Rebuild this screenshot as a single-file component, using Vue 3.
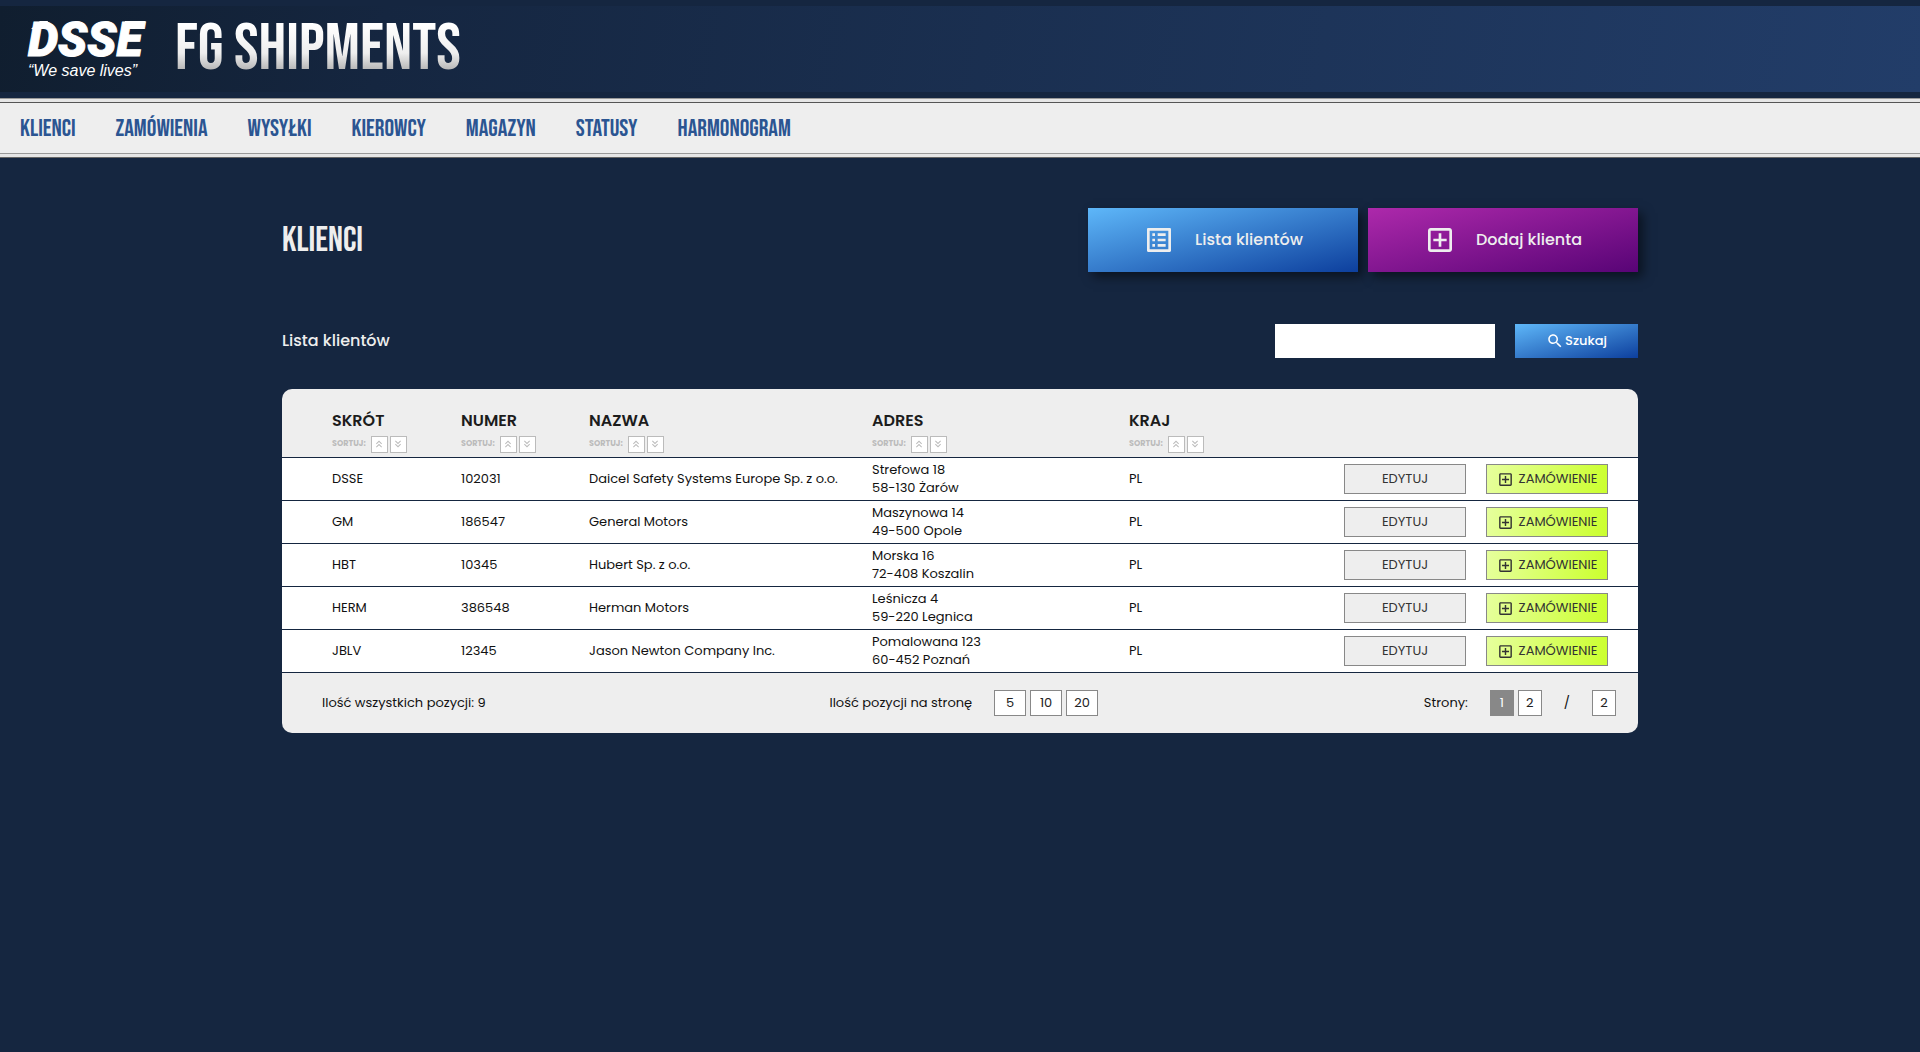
<script setup>
import { ref } from 'vue'

const links = ['Klienci', 'Zamówienia', 'Wysyłki', 'Kierowcy', 'Magazyn', 'Statusy', 'Harmonogram']
const columns = ['Skrót', 'Numer', 'Nazwa', 'Adres', 'Kraj']
const clients = [
  { short: 'DSSE', number: '102031', name: 'Daicel Safety Systems Europe Sp. z o.o.', street: 'Strefowa 18', city: '58-130 Żarów', country: 'PL' },
  { short: 'GM', number: '186547', name: 'General Motors', street: 'Maszynowa 14', city: '49-500 Opole', country: 'PL' },
  { short: 'HBT', number: '10345', name: 'Hubert Sp. z o.o.', street: 'Morska 16', city: '72-408 Koszalin', country: 'PL' },
  { short: 'HERM', number: '386548', name: 'Herman Motors', street: 'Leśnicza 4', city: '59-220 Legnica', country: 'PL' },
  { short: 'JBLV', number: '12345', name: 'Jason Newton Company Inc.', street: 'Pomalowana 123', city: '60-452 Poznań', country: 'PL' },
]
const pageSizes = [5, 10, 20]
const query = ref('')
const page = ref(1)

const addIcon = 'M19 3H5c-1.11 0-2 .9-2 2v14c0 1.1.89 2 2 2h14c1.1 0 2-.9 2-2V5c0-1.1-.9-2-2-2zm0 16H5V5h14v14zm-8-2h2v-4h4v-2h-4V7h-2v4H7v2h4z'
const listIcon = 'M19 5v14H5V5h14m1.1-2H3.9c-.5 0-.9.4-.9.9v16.2c0 .4.4.9.9.9h16.2c.4 0 .9-.5.9-.9V3.9c0-.5-.5-.9-.9-.9zM11 7h6v2h-6V7zm0 4h6v2h-6v-2zm0 4h6v2h-6zM7 7h2v2H7zm0 4h2v2H7zm0 4h2v2H7z'
const searchIcon = 'M15.5 14h-.79l-.28-.27C15.41 12.59 16 11.11 16 9.5 16 5.91 13.09 3 9.5 3S3 5.91 3 9.5 5.91 16 9.5 16c1.61 0 3.09-.59 4.23-1.57l.27.28v.79l5 4.99L20.49 19l-4.99-5zm-6 0C7.01 14 5 11.99 5 9.5S7.01 5 9.5 5 14 7.01 14 9.5 11.99 14 9.5 14z'
const upIcon = 'M6 17.59 7.41 19 12 14.42 16.59 19 18 17.59l-6-6zM6 11l1.41 1.41L12 7.83l4.59 4.58L18 11l-6-6z'
const downIcon = 'M18 6.41 16.59 5 12 9.58 7.41 5 6 6.41l6 6zM18 13l-1.41-1.41L12 16.17l-4.59-4.58L6 13l6 6z'
</script>

<template>
  <div class="app">
    <header class="banner">
      <svg class="logo" viewBox="0 0 120 60" role="img" aria-label="DSSE">
        <text class="logo-name" x="0" y="37">DSSE</text>
        <path d="M3 10 12 2h8l-3 8z M97 2h21l-9 8H95z" />
        <text class="logo-motto" x="0" y="57">“We save lives”</text>
      </svg>
      <h1 class="brand">FG Shipments</h1>
    </header>

    <nav class="menu">
      <ul class="menu-list">
        <li v-for="link in links" :key="link"><a class="menu-link" href="#">{{ link }}</a></li>
      </ul>
    </nav>

    <main class="content">
      <div class="title-row">
        <h2 class="title">Klienci</h2>
        <div class="actions">
          <button class="action blue" type="button">
            <svg class="icon-lg" viewBox="0 0 24 24" aria-hidden="true"><path :d="listIcon" /></svg>
            <span>Lista klientów</span>
          </button>
          <button class="action purple" type="button">
            <svg class="icon-lg" viewBox="0 0 24 24" aria-hidden="true"><path :d="addIcon" /></svg>
            <span>Dodaj klienta</span>
          </button>
        </div>
      </div>

      <div class="search-row">
        <h3 class="subtitle">Lista klientów</h3>
        <form class="search" @submit.prevent>
          <input v-model="query" class="search-input" type="text" aria-label="Szukaj klienta">
          <button class="search-button blue" type="submit">
            <svg class="icon-md" viewBox="0 0 24 24" aria-hidden="true"><path :d="searchIcon" /></svg>
            <span>Szukaj</span>
          </button>
        </form>
      </div>

      <section class="card">
        <table class="clients">
          <colgroup>
            <col class="col-short">
            <col class="col-number">
            <col class="col-name">
            <col class="col-address">
            <col>
            <col class="col-buttons">
          </colgroup>
          <thead>
            <tr>
              <th v-for="column in columns" :key="column" scope="col">
                <span class="column-name">{{ column }}</span>
                <span class="sort">
                  <span class="sort-label">Sortuj:</span>
                  <button class="sort-button" type="button" :aria-label="`${column} rosnąco`">
                    <svg class="icon-xs" viewBox="0 0 24 24" aria-hidden="true"><path :d="upIcon" /></svg>
                  </button>
                  <button class="sort-button" type="button" :aria-label="`${column} malejąco`">
                    <svg class="icon-xs" viewBox="0 0 24 24" aria-hidden="true"><path :d="downIcon" /></svg>
                  </button>
                </span>
              </th>
              <td></td>
            </tr>
          </thead>
          <tbody>
            <tr v-for="client in clients" :key="client.number">
              <td>{{ client.short }}</td>
              <td>{{ client.number }}</td>
              <td>{{ client.name }}</td>
              <td>{{ client.street }}<br>{{ client.city }}</td>
              <td>{{ client.country }}</td>
              <td>
                <div class="row-buttons">
                  <button class="row-button" type="button">Edytuj</button>
                  <button class="row-button green" type="button">
                    <svg class="icon-sm" viewBox="0 0 24 24" aria-hidden="true"><path :d="addIcon" /></svg>
                    <span>Zamówienie</span>
                  </button>
                </div>
              </td>
            </tr>
          </tbody>
        </table>

        <footer class="pager">
          <span>Ilość wszystkich pozycji: 9</span>
          <div class="pager-group sizes">
            <span>Ilość pozycji na stronę</span>
            <div class="pager-buttons">
              <button v-for="size in pageSizes" :key="size" class="pager-button wide" type="button">{{ size }}</button>
            </div>
          </div>
          <div class="pager-group">
            <span>Strony:</span>
            <div class="pager-buttons">
              <button
                v-for="n in 2"
                :key="n"
                class="pager-button"
                :class="{ active: n === page }"
                type="button"
                @click="page = n"
              >{{ n }}</button>
            </div>
            <span>/</span>
            <button class="pager-button" type="button" @click="page = 2">2</button>
          </div>
        </footer>
      </section>
    </main>
  </div>
</template>

<style>
body {
  margin: 0;
  background: #152640;
}
</style>

<style scoped>
.app {
  padding-top: 6px;
  font-family: "Poppins", "Inter", sans-serif;
  font-size: 13px;
  line-height: 18px;
  color: #111;
}

h1,
h2,
h3,
ul {
  margin: 0;
  padding: 0;
}

button {
  display: flex;
  align-items: center;
  justify-content: center;
  padding: 0;
  border: 0;
  font: inherit;
  cursor: pointer;
}

svg {
  flex: none;
  fill: currentColor;
}

.icon-lg { width: 32px; height: 32px; }
.icon-md { width: 18px; height: 18px; }
.icon-sm { width: 17px; height: 17px; }
.icon-xs { width: 12px; height: 12px; }

.banner {
  display: flex;
  align-items: center;
  gap: 27px;
  height: 86px;
  margin-bottom: 6px;
  padding-left: 28px;
  background: linear-gradient(100deg, #101e2f, #152640 20%, #223d69);
  color: #fff;
}

.logo {
  width: 120px;
  height: 60px;
  overflow: visible;
}

.logo-name {
  font: italic 900 48px "Roboto", sans-serif;
  stroke: #fff;
  stroke-width: 1px;
}

.logo-motto {
  font: italic 16px "Liberation Sans", sans-serif;
}

.brand {
  padding-top: 2px;
  background: linear-gradient(#fff 20%, #eee 55%, #aaa 80%);
  background-clip: text;
  color: transparent;
  font: 400 66px/80px "Bebas Neue", sans-serif;
  text-transform: uppercase;
}

.menu {
  padding: 3px 0;
  border-top: 1px solid #999;
  border-bottom: 1px solid #666;
  background: #e6e6e6;
}

.menu-list {
  display: flex;
  border-top: 1px solid #555;
  border-bottom: 1px solid #999;
  background: #eee;
  list-style: none;
}

.menu-link {
  display: block;
  padding: 1px 20px 0;
  color: #2b5592;
  font: 400 24px/49px "Bebas Neue", sans-serif;
  text-decoration: none;
  text-transform: uppercase;
}

.content {
  max-width: 1356px;
  margin: 0 auto;
  padding: 50px 20px;
}

.title-row,
.search-row {
  display: flex;
  align-items: center;
  justify-content: space-between;
  color: #eee;
}

.title {
  padding-top: 2px;
  font: 400 35px/62px "Bebas Neue", sans-serif;
  text-transform: uppercase;
}

.actions {
  display: flex;
  gap: 10px;
}

.action {
  gap: 20px;
  width: 270px;
  height: 64px;
  box-shadow: 5px 5px 10px rgba(0, 0, 0, 0.5);
  color: #eee;
  font-size: 16px;
  font-weight: 500;
  line-height: 24px;
}

.blue { background: linear-gradient(to bottom right, #5eb7f9, #0d3f9d); }
.purple { background: linear-gradient(to bottom right, #ad29ab, #580476); }

.search-row {
  margin: 52px 0 31px;
}

.subtitle {
  font-size: 16px;
  font-weight: 500;
}

.search {
  display: flex;
  gap: 20px;
}

.search-input {
  box-sizing: border-box;
  width: 220px;
  height: 34px;
  padding: 0 10px;
  border: 0;
  background: #fff;
  font: inherit;
}

.search-button {
  gap: 1px;
  width: 123px;
  height: 34px;
  color: #fff;
  font-weight: 500;
}

.card {
  overflow: hidden;
  border-radius: 10px;
  background: #eee;
}

.clients {
  width: 100%;
  border-spacing: 0;
  table-layout: fixed;
}

.col-short { width: 179px; }
.col-number { width: 128px; }
.col-name { width: 283px; }
.col-address { width: 257px; }
.col-buttons { width: 294px; }

.clients th {
  padding: 20px 0 4px;
  text-align: left;
}

.clients th:first-child,
.clients td:first-child {
  padding-left: 50px;
}

.column-name {
  display: block;
  margin-bottom: 3px;
  color: #1c1c1c;
  font-size: 16px;
  font-weight: 600;
  line-height: 24px;
  text-transform: uppercase;
}

.sort {
  display: flex;
  gap: 2px;
  color: #bbb;
}

.sort-label {
  margin-right: 3px;
  font-size: 8px;
  font-weight: 700;
  line-height: 15px;
  text-transform: uppercase;
}

.sort-button {
  box-sizing: border-box;
  width: 17px;
  height: 17px;
  padding-bottom: 1px;
  border: 1px solid #bbb;
  background: #fff;
  color: #bbb;
}

.clients tbody td {
  height: 36px;
  padding: 3px 0;
  border-top: 1px solid #152640;
  background: #fff;
}

.row-buttons {
  display: flex;
  justify-content: flex-end;
  gap: 20px;
  padding-right: 30px;
}

.row-button {
  box-sizing: border-box;
  gap: 5px;
  width: 122px;
  height: 30px;
  border: 1px solid #888;
  background: #eee;
  color: #333;
  text-transform: uppercase;
}

.green { background: linear-gradient(100deg, #e6ff9d, #cbff2e); }

.pager {
  display: flex;
  align-items: center;
  justify-content: space-between;
  height: 60px;
  padding: 0 22px 0 40px;
  border-top: 1px solid #152640;
}

.pager-group {
  display: flex;
  align-items: center;
  gap: 22px;
}

.sizes {
  margin-left: 18px;
}

.pager-buttons {
  display: flex;
  gap: 4px;
}

.pager-button {
  box-sizing: border-box;
  width: 24px;
  height: 26px;
  border: 1px solid #888;
  background: #fff;
  color: #222;
}

.wide { width: 32px; }

.active {
  background: #888;
  color: #fff;
}
</style>
